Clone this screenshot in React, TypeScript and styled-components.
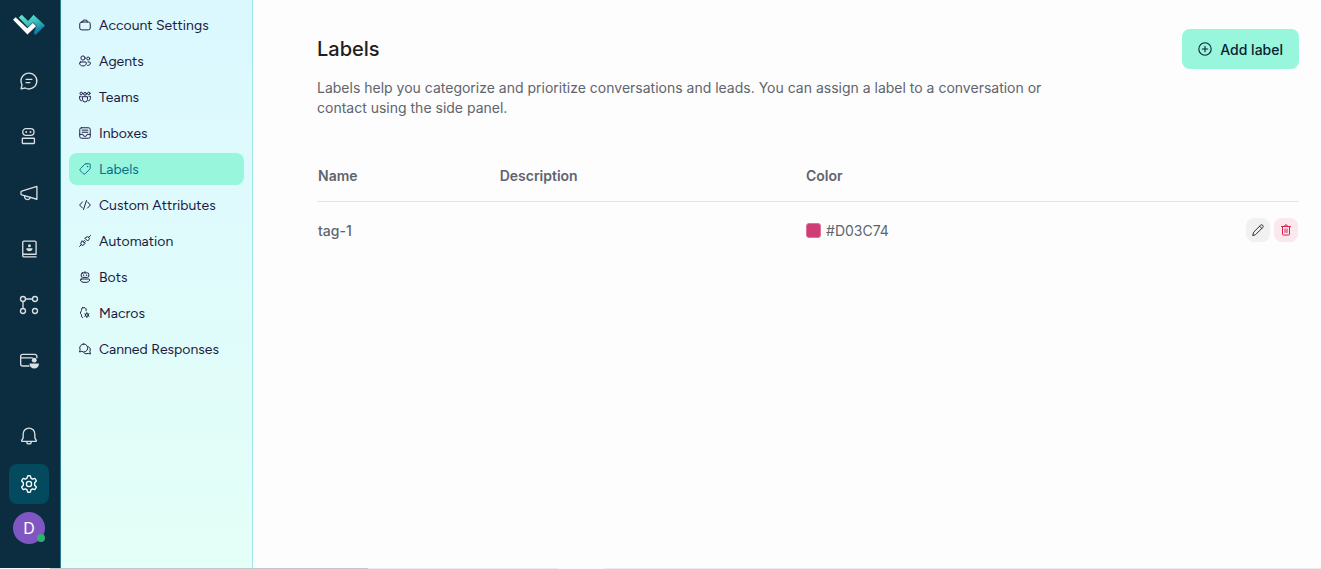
import React from 'react';
import styled, { createGlobalStyle } from 'styled-components';

const Global = createGlobalStyle`
  *, *::before, *::after { box-sizing: border-box; }
  body { margin: 0; background: #fdfdfd; font-family: Inter, "Liberation Sans", sans-serif; color: #60646c; }
  button { font: inherit; border: 0; padding: 0; cursor: pointer; }
`;

const Page = styled.div`
  display: grid;
  grid-template-rows: 1fr 1px;
  min-height: 100vh;
`;

const Shell = styled.div`
  display: grid;
  grid-template-columns: 61px 192px minmax(0, 1fr);
`;

const BottomEdge = styled.div`
  background: linear-gradient(to right, #f8f8f8 50px, #c6c6c6 50px, #c6c6c6 368px, #ebebeb 368px, #ebebeb 558px, #f8f8f8 558px, #f8f8f8 604px, #ebebeb 604px);
`;

const Rail = styled.nav`
  display: flex;
  flex-direction: column;
  justify-content: space-between;
  padding: 9px 11px 24px 9px;
  background: #0c2d3f;
  border-right: 1px solid #2a7b93;
`;

const RailGroup = styled.div<{ $gap: number }>`
  display: flex;
  flex-direction: column;
  align-items: center;
  gap: ${({ $gap }) => $gap}px;
`;

const LogoLink = styled.a`
  display: block;
  height: 36px;
  padding-top: 5px;
`;

const LogoDrawing = styled.svg`
  display: block;
`;

const RailLink = styled.a<{ $active?: boolean }>`
  display: grid;
  place-items: center;
  width: 40px;
  height: 40px;
  border-radius: 8px;
  color: ${({ $active }) => ($active ? '#ffffff' : '#d9dfe2')};
  background: ${({ $active }) => ($active ? '#034a5f' : 'transparent')};
`;

const Avatar = styled.button`
  position: relative;
  width: 32px;
  height: 32px;
  border-radius: 50%;
  background: #8057c2;
  color: #fff;
  font-size: 16px;
  line-height: 32px;
`;

const Presence = styled.span`
  position: absolute;
  right: 0;
  bottom: 2px;
  width: 8px;
  height: 8px;
  border-radius: 50%;
  background: #30b171;
`;

const Sidebar = styled.nav`
  padding: 9px 8px;
  background: linear-gradient(to bottom, #dbf8ff, #e4fff7);
  border-right: 1px solid #9fe7ee;
`;

const MenuList = styled.ul`
  display: flex;
  flex-direction: column;
  gap: 4px;
  margin: 0;
  padding: 0;
  list-style: none;
`;

const MenuLink = styled.a<{ $active?: boolean }>`
  display: flex;
  align-items: center;
  gap: 8px;
  height: 32px;
  padding: 0 10px;
  border-radius: 8px;
  font-family: Figtree, Inter, "Liberation Sans", sans-serif;
  font-size: 14px;
  line-height: 20px;
  white-space: nowrap;
  text-decoration: none;
  color: ${({ $active }) => ($active ? '#08708a' : '#1b1b3f')};
  background: ${({ $active }) => ($active ? '#97f6dc' : 'transparent')};
`;

const MenuText = styled.span`
  padding-top: 2px;
`;

const Main = styled.main`
  padding: 29px 22px 24px 64px;
`;

const Header = styled.header`
  display: flex;
  align-items: center;
  justify-content: space-between;
`;

const Title = styled.h1`
  margin: 0;
  font-size: 20px;
  line-height: 28px;
  font-weight: 500;
  color: #1c2024;
`;

const AddButton = styled.button`
  display: flex;
  align-items: center;
  gap: 8px;
  height: 40px;
  padding: 0 16px;
  border-radius: 8px;
  background: #97f6dc;
  color: #0c2230;
  font-size: 14px;
  font-weight: 500;
`;

const Intro = styled.p`
  max-width: 736px;
  margin: 9px 0 32px;
  font-size: 14px;
  line-height: 20px;
`;

const Table = styled.table`
  width: 100%;
  table-layout: fixed;
  border-collapse: collapse;
  font-size: 14px;
  line-height: 20px;
`;

const HeadCell = styled.th<{ $width?: string }>`
  width: ${({ $width }) => $width ?? 'auto'};
  padding: 16px 1px 15px;
  border-bottom: 1px solid #e6e6e9;
  font-weight: 600;
  text-align: left;
`;

const Cell = styled.td<{ $strong?: boolean }>`
  padding: 18px 1px 16px;
  font-weight: ${({ $strong }) => ($strong ? 500 : 400)};
`;

const ActionCell = styled(Cell)`
  padding: 16px 1px;
`;

const ColorValue = styled.div`
  display: flex;
  align-items: center;
  gap: 5px;
`;

const Swatch = styled.span`
  width: 15px;
  height: 15px;
  margin-bottom: 2px;
  border-radius: 3px;
  border: 1px solid #dc7199;
  background: #d03c74;
`;

const Actions = styled.div`
  display: flex;
  justify-content: flex-end;
  gap: 4px;
`;

const ActionButton = styled.button<{ $danger?: boolean }>`
  display: grid;
  place-items: center;
  width: 24px;
  height: 24px;
  border-radius: 8px;
  color: ${({ $danger }) => ($danger ? '#d4234f' : '#2a2d33')};
  background: ${({ $danger }) => ($danger ? '#fbe8ed' : '#f1f1f2')};
`;

type IconProps = { size: number; box?: number; stroke?: number; children: React.ReactNode };

const Icon = ({ size, box = 24, stroke = 1.6, children }: IconProps) => (
  <svg
    width={size}
    height={size}
    viewBox={`0 0 ${box} ${box}`}
    fill="none"
    stroke="currentColor"
    strokeWidth={stroke}
    strokeLinecap="round"
    strokeLinejoin="round"
    aria-hidden="true"
  >
    {children}
  </svg>
);

const Logo = () => (
  <LogoDrawing width="34" height="22" viewBox="0 0 34 22" aria-hidden="true">
    <defs>
      <linearGradient id="logoTeal" x1="0" y1="0" x2="0.5" y2="1">
        <stop offset="0" stopColor="#68eccf" />
        <stop offset="0.5" stopColor="#3cc0bd" />
        <stop offset="1" stopColor="#0878a5" />
      </linearGradient>
    </defs>
    <path d="M6.8 3.400 9.800.8l6.300 6.200L21.500.8 33 11.400 23.600 21l-1.800-1.700 2.700-7.200-3.600-3.900-5 5Z" fill="url(#logoTeal)" />
    <path d="M.8 5.800 3.600 3l11.800 11 5.400-5.400 3.600 3.600-9 8.600Z" fill="#fff" stroke="#0c2d3f" strokeWidth=".5" />
  </LogoDrawing>
);

const railItems = [
  {
    label: 'Conversations',
    icon: <><path d="M12 2.500a9.500 9.500 0 1 1-4.500 17.900L2.500 21.500l1.100-5A9.500 9.500 0 0 1 12 2.500Z" /><path d="M8.500 10h7M8.500 14h4.500" /></>,
  },
  {
    label: 'Captain',
    icon: <><rect x="4.500" y="2" width="13.500" height="8" rx="4" /><rect x="4" y="13.500" width="14.500" height="6.300" rx=".5" /><path d="M8.600 6h.1M13.700 6h.1" strokeWidth="2.200" /></>,
  },
  {
    label: 'Campaigns',
    icon: <><path d="M21.500 4v15.500L3.200 14.200a1 1 0 0 1-.8-1v-2.400a1 1 0 0 1 .8-1L21.500 4Z" /><path d="M6.800 15.400a3.500 3.500 0 0 0 6.800 1.800" /></>,
  },
  {
    label: 'Contacts',
    icon: <><path d="M20.500 18V4A1.500 1.500 0 0 0 19 2.500H6A1.500 1.500 0 0 0 4.500 4v16A1.500 1.500 0 0 0 6 21.500h14.500M4.500 18.300h16" /><circle cx="12.500" cy="8" r="1.800" fill="currentColor" stroke="none" /><path d="M8.800 11h7.400v.8c0 1.800-1.600 2.800-3.700 2.800s-3.700-1-3.700-2.800Z" fill="currentColor" stroke="none" /></>,
  },
  {
    label: 'Workflows',
    icon: <><circle cx="4.800" cy="4.800" r="3" /><circle cx="19.200" cy="4.800" r="3" /><circle cx="4.800" cy="19.200" r="3" /><circle cx="19.200" cy="19.200" r="3" /><path d="M7.800 4.800h8.400M4.800 7.800v8.400" /></>,
  },
  {
    label: 'Customers',
    icon: <><path d="M12 18H4.500A2.500 2.500 0 0 1 2 15.500v-9A2.500 2.500 0 0 1 4.500 4H19a2.500 2.500 0 0 1 2.500 2.500V8M2 8.200h14" /><circle cx="18.300" cy="11" r="2.900" fill="currentColor" stroke="none" /><path d="M12.800 15h11v1c0 3.200-2.300 5-5.500 5s-5.500-1.800-5.500-5Z" fill="currentColor" stroke="none" /></>,
  },
];

const gear = (
  <>
    <path d="M10.300 2.300a8 8 0 0 1 3.400 0l.6 2.700 1.900 1.100 2.700-.8a9.500 9.500 0 0 1 1.900 3.100l-2 2v3.200l2 2a9.500 9.500 0 0 1-1.900 3.100l-2.700-.8-1.900 1.100-.6 2.700a8 8 0 0 1-3.400 0L9.700 19l-1.900-1.100-2.700.8a9.500 9.500 0 0 1-1.900-3.100l2-2v-3.200l-2-2a9.500 9.500 0 0 1 1.900-3.100l2.700.8L9.700 5Z" />
    <circle cx="12" cy="12" r="3.100" />
  </>
);

const menuItems = [
  { label: 'Account Settings', icon: <><rect x="1" y="4" width="14" height="10.500" rx="2.500" /><path d="M5 4V2.800a1.300 1.300 0 0 1 1.300-1.300h3.400A1.300 1.300 0 0 1 11 2.800V4" /></> },
  { label: 'Agents', icon: <><circle cx="5.300" cy="4" r="2.800" /><circle cx="12.300" cy="4.700" r="2" /><path d="M2.200 9.300h6.300a1.300 1.300 0 0 1 1.300 1.300c0 2.500-1.700 4-4.500 4S.8 13.100.8 10.600a1.300 1.300 0 0 1 1.400-1.300ZM12 9.300h1.900a1.300 1.300 0 0 1 1.300 1.300c0 2.200-1.400 3.500-3.700 3.300" /></> },
  { label: 'Teams', icon: <><circle cx="8" cy="3.800" r="1.900" /><circle cx="3" cy="3.200" r="1.700" /><circle cx="13" cy="3.200" r="1.700" /><path d="M4.700 7.600h6.600v3.800a3.300 3.300 0 0 1-6.600 0ZM2.800 7H.8v3a3.300 3.300 0 0 0 2.500 3.200M13.200 7h2v3a3.300 3.300 0 0 1-2.500 3.200" /></> },
  { label: 'Inboxes', icon: <><rect x="1" y="1" width="14" height="14" rx="2.300" /><path d="M1 9.800h4.300a2.700 2.700 0 0 0 5.400 0H15M4.200 4.200h7.600M4.200 7h7.600" /></> },
  { label: 'Labels', icon: <><path d="M9.300 1H14a1 1 0 0 1 1 1v4.700a2.300 2.300 0 0 1-.7 1.600l-5.700 5.700a2.200 2.200 0 0 1-3.200 0L2 10.600a2.200 2.200 0 0 1 0-3.200l5.700-5.700A2.300 2.300 0 0 1 9.300 1Z" /><path d="M11.500 4.500h.1" strokeWidth="2" /></>, active: true },
  { label: 'Custom Attributes', icon: <path d="M4.500 4 .8 8l3.700 4M11.500 4l3.700 4-3.700 4M10 2 6 14" /> },
  { label: 'Automation', icon: <><path d="m8 4.500 3.500 3.500 1.500-1.500A2.500 2.500 0 0 0 13 3a2.500 2.500 0 0 0-3.500 0ZM4.500 8 8 11.500 6.500 13A2.500 2.500 0 0 1 3 13a2.500 2.500 0 0 1 0-3.500ZM13 3l2.300-2.300M3 13 .7 15.300M5.500 9l1.800-1.800M7 10.500l1.800-1.800" /></> },
  { label: 'Bots', icon: <><rect x="3" y="2.500" width="10" height="6" rx="1.700" /><path d="M8 .8v1.700" /><path d="M6 5.500h.1M10 5.500h.1" strokeWidth="1.900" /><path d="M3 10.700h10a1.200 1.200 0 0 1 1.200 1.200c0 2-2.300 3.300-6.200 3.300s-6.200-1.300-6.200-3.300A1.200 1.200 0 0 1 3 10.700Z" /></> },
  { label: 'Macros', icon: <><path d="M4.500 1H8l1.500 1.500V5M4.500 1C3.200 1 3.500 3 3.300 4.500S1.800 6.500 1.800 8s1.500 1 1.500 3 0 3 1.700 3" /><circle cx="10.500" cy="10.700" r="1.900" /><path d="M10.500 7.500v1M10.500 13v1M7.700 9.100l.9.500M12.400 11.800l.9.500M7.700 12.300l.9-.5M12.400 9.600l.9-.5" /></> },
  { label: 'Canned Responses', icon: <><path d="M6.300 1.300a5.300 5.300 0 1 1-2.600 9.900l-3 .8.800-3a5.300 5.300 0 0 1 4.800-7.700Z" /><path d="M12.700 4.700a5.300 5.300 0 0 1 1.800 7l.8 3-3-.8a5.300 5.300 0 0 1-5.800-.7" /></> },
];

export default function App() {
  return (
    <>
      <Global />
      <Page>
        <Shell>
          <Rail aria-label="Primary">
            <RailGroup $gap={16}>
              <LogoLink href="#" aria-label="Home">
                <Logo />
              </LogoLink>
              {railItems.map((item) => (
                <RailLink key={item.label} href="#" aria-label={item.label}>
                  <Icon size={20}>{item.icon}</Icon>
                </RailLink>
              ))}
            </RailGroup>
            <RailGroup $gap={8}>
              <RailLink href="#" aria-label="Notifications">
                <Icon size={20}>
                  <path d="M12 2.500a7 7 0 0 1 7 7v4.700l1.700 3.100a.8.8 0 0 1-.7 1.200H4a.8.8 0 0 1-.7-1.200L5 14.200V9.500a7 7 0 0 1 7-7ZM9.300 18.800a2.700 2.700 0 0 0 5.400 0" />
                </Icon>
              </RailLink>
              <RailLink href="#" aria-label="Settings" $active>
                <Icon size={20}>{gear}</Icon>
              </RailLink>
              <Avatar type="button">
                D
                <Presence />
              </Avatar>
            </RailGroup>
          </Rail>
          <Sidebar aria-label="Settings">
            <MenuList>
              {menuItems.map((item) => (
                <li key={item.label}>
                  <MenuLink href="#" $active={item.active}>
                    <Icon size={12} box={16} stroke={1.3}>{item.icon}</Icon>
                    <MenuText>{item.label}</MenuText>
                  </MenuLink>
                </li>
              ))}
            </MenuList>
          </Sidebar>
          <Main>
            <Header>
              <Title>Labels</Title>
              <AddButton type="button">
                <Icon size={14} box={14} stroke={1.1}>
                  <circle cx="7" cy="7" r="6.200" />
                  <path d="M7 4.300v5.400M4.300 7h5.400" />
                </Icon>
                Add label
              </AddButton>
            </Header>
            <Intro>
              Labels help you categorize and prioritize conversations and leads. You can assign a label to a
              conversation or contact using the side panel.
            </Intro>
            <Table>
              <thead>
                <tr>
                  <HeadCell scope="col" $width="18.5%">Name</HeadCell>
                  <HeadCell scope="col" $width="31.2%">Description</HeadCell>
                  <HeadCell scope="col">Color</HeadCell>
                  <HeadCell scope="col" aria-label="Actions" />
                </tr>
              </thead>
              <tbody>
                <tr>
                  <Cell $strong>tag-1</Cell>
                  <Cell />
                  <Cell>
                    <ColorValue>
                      <Swatch />
                      #D03C74
                    </ColorValue>
                  </Cell>
                  <ActionCell>
                    <Actions>
                      <ActionButton type="button" aria-label="Edit">
                        <Icon size={14} box={14} stroke={1}>
                          <path d="m1.800 12.200.8-3 6.900-6.900a1.550 1.550 0 0 1 2.200 2.200l-6.900 6.900ZM8.600 3.200l2.200 2.200" />
                        </Icon>
                      </ActionButton>
                      <ActionButton type="button" aria-label="Delete" $danger>
                        <Icon size={14} box={14} stroke={1}>
                          <path d="M2.500 3.500h9M5.500 3.300a1.500 1.500 0 0 1 3 0M3.500 3.500v7.500a1 1 0 0 0 1 1h5a1 1 0 0 0 1-1V3.500M6 6v3.500M8 6v3.500" />
                        </Icon>
                      </ActionButton>
                    </Actions>
                  </ActionCell>
                </tr>
              </tbody>
            </Table>
          </Main>
        </Shell>
        <BottomEdge />
      </Page>
    </>
  );
}
